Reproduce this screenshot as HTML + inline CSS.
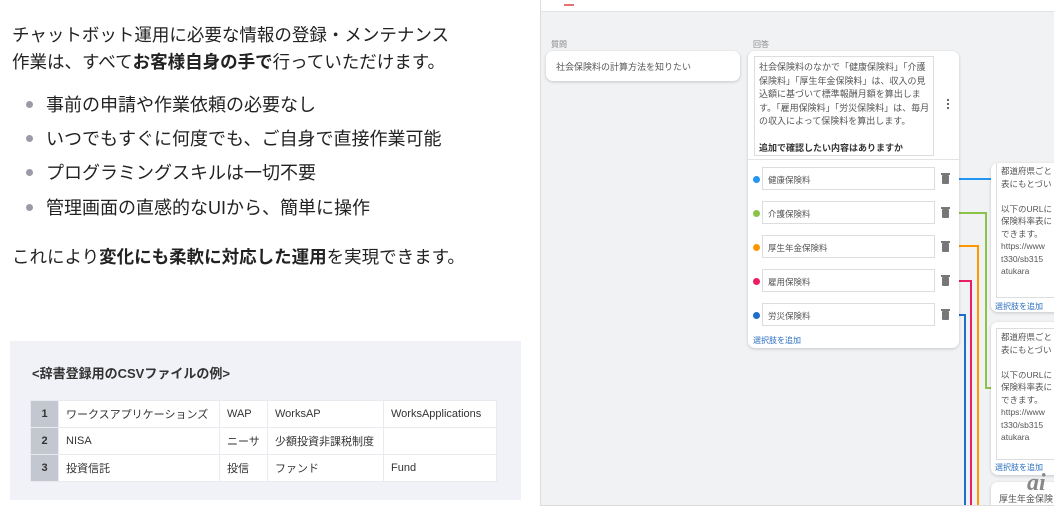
<!DOCTYPE html>
<html><head><meta charset="utf-8"><style>
*{margin:0;padding:0;box-sizing:border-box}
body{width:1058px;height:506px;background:#fff;position:relative;overflow:hidden;font-family:"Liberation Sans","Noto Sans CJK JP",sans-serif;color:#222}
.a{position:absolute}
.t{font-size:17.5px;white-space:nowrap;left:12px}
.li{left:26px;font-size:18px;white-space:nowrap}
.li:before{content:"";display:inline-block;width:7px;height:7px;border-radius:50%;background:#9a9aa8;margin-right:13px;vertical-align:middle;position:relative;top:-2px}
b{font-weight:bold}
.box{left:10px;top:341px;width:511px;height:159px;background:#f0f2f7}
table{position:absolute;left:30px;top:400px;border-collapse:collapse;font-size:11px;color:#333}
td{height:27px;background:#fff;border:1px solid #e8eaef;padding-left:7px}
td.n{background:#c3c7cf;width:28px;text-align:center;padding:0;font-weight:bold}
.panel{left:540px;top:0;width:514px;height:506px;background:#f1f2f4;border-left:1px solid #ddd;border-bottom:1px solid #ddd;overflow:hidden}
.card{background:#fff;border-radius:7px;box-shadow:0 1px 3px rgba(0,0,0,.18)}
.s{font-size:9px;color:#555;white-space:nowrap}
.inp{position:absolute;left:14px;width:173px;height:23px;border:1px solid #ddd;background:#fff;font-size:8.5px;color:#555;padding:6px 5px}
.dot{position:absolute;left:5px;width:7px;height:7px;border-radius:50%}
.tr{position:absolute;left:194px;width:7px;height:9px;background:#777;border-radius:1px}
.tr:before{content:"";position:absolute;left:-1px;top:-2px;width:9px;height:1.5px;background:#777}
.h{position:absolute;height:2px}
.v{position:absolute;width:2px}
.rt{font-size:8.5px;color:#555;line-height:12.5px;white-space:nowrap}
</style></head><body>
<div class="a t" style="top:22px">チャットボット運用に必要な情報の登録・メンテナンス</div>
<div class="a t" style="top:49px">作業は、すべて<b>お客様自身の手で</b>行っていただけます。</div>
<div class="a li" style="top:91px">事前の申請や作業依頼の必要なし</div>
<div class="a li" style="top:125px">いつでもすぐに何度でも、ご自身で直接作業可能</div>
<div class="a li" style="top:159px">プログラミングスキルは一切不要</div>
<div class="a li" style="top:194px">管理画面の直感的なUIから、簡単に操作</div>
<div class="a t" style="top:244px">これにより<b>変化にも柔軟に対応した運用</b>を実現できます。</div>

<div class="a box"></div>
<div class="a" style="left:32px;top:363px;font-size:13px;font-weight:bold;color:#333">&lt;辞書登録用のCSVファイルの例&gt;</div>
<table>
<tr><td class="n">1</td><td style="width:161px">ワークスアプリケーションズ</td><td style="width:48px">WAP</td><td style="width:116px">WorksAP</td><td style="width:113px">WorksApplications</td></tr>
<tr><td class="n">2</td><td>NISA</td><td>ニーサ</td><td>少額投資非課税制度</td><td></td></tr>
<tr><td class="n">3</td><td>投資信託</td><td>投信</td><td>ファンド</td><td>Fund</td></tr>
</table>

<div class="a panel">
 <div class="a" style="left:0;top:0;width:514px;height:12px;background:#fff;border-bottom:1px solid #e2e2e2"></div>
 <div class="a" style="left:23px;top:4px;width:10px;height:2px;background:#e57373"></div>
 <div class="a s" style="left:10px;top:39px;font-size:8px;color:#888">質問</div>
 <div class="a card" style="left:5px;top:51px;width:194px;height:30px"><div class="s" style="padding:9px 10px">社会保険料の計算方法を知りたい</div></div>
 <div class="a s" style="left:212px;top:39px;font-size:8px;color:#888">回答</div>
 <div class="h" style="left:418px;top:178px;width:32px;background:#2196f3"></div>
 <div class="h" style="left:418px;top:212px;width:28px;background:#8bc34a"></div>
 <div class="v" style="left:444px;top:212px;height:177px;background:#8bc34a"></div>
 <div class="h" style="left:444px;top:387px;width:6px;background:#8bc34a"></div>
 <div class="h" style="left:418px;top:245px;width:20px;background:#ff9800"></div>
 <div class="v" style="left:436px;top:245px;height:270px;background:#ff9800"></div>
 <div class="h" style="left:418px;top:280px;width:13px;background:#e91e63"></div>
 <div class="v" style="left:429px;top:280px;height:240px;background:#e91e63"></div>
 <div class="h" style="left:418px;top:314px;width:7px;background:#1e6fc7"></div>
 <div class="v" style="left:423px;top:314px;height:200px;background:#1e6fc7"></div>
 <div class="a card" style="left:207px;top:51px;width:211px;height:297px">
  <div class="a" style="left:6px;top:5px;width:180px;height:100px;border:1px solid #ddd;font-size:9px;color:#555;line-height:13.5px;padding:4px 3px 0 4px;overflow:hidden">社会保険料のなかで「健康保険料」「介護保険料」「厚生年金保険料」は、収入の見込額に基づいて標準報酬月額を算出します。「雇用保険料」「労災保険料」は、毎月の収入によって保険料を算出します。<br><br><b style="color:#333">追加で確認したい内容はありますか</b></div>
  <div class="a" style="left:199px;top:48px;width:2px;height:10px;border-left:2px dotted #666"></div>
  <div class="a" style="left:0;top:108px;width:211px;height:1px;background:#e4e4e4"></div>
  <div class="dot" style="top:125px;background:#2196f3"></div><div class="inp" style="top:116px">健康保険料</div><div class="tr" style="top:124px"></div>
  <div class="dot" style="top:159px;background:#8bc34a"></div><div class="inp" style="top:150px">介護保険料</div><div class="tr" style="top:158px"></div>
  <div class="dot" style="top:193px;background:#ff9800"></div><div class="inp" style="top:184px">厚生年金保険料</div><div class="tr" style="top:192px"></div>
  <div class="dot" style="top:227px;background:#e91e63"></div><div class="inp" style="top:218px">雇用保険料</div><div class="tr" style="top:226px"></div>
  <div class="dot" style="top:261px;background:#1e6fc7"></div><div class="inp" style="top:252px">労災保険料</div><div class="tr" style="top:260px"></div>
  <div class="a s" style="left:5px;top:284px;font-size:8px;color:#2a6fbf">選択肢を追加</div>
 </div>
 <div class="a card" style="left:450px;top:163px;width:80px;height:149px">
  <div class="a rt" style="left:5px;top:0;width:80px;height:135px;border:1px solid #ddd;border-top:none;padding:2px 4px">都道府県ごと<br>表にもとづい<br><br>以下のURLに<br>保険料率表に<br>できます。<br>https://www<br>t330/sb315<br>atukara</div>
  <div class="a" style="left:4px;top:138px;font-size:8px;color:#2a6fbf;white-space:nowrap">選択肢を追加</div>
 </div>
 <div class="a card" style="left:450px;top:322px;width:80px;height:153px">
  <div class="a rt" style="left:5px;top:6px;width:80px;height:132px;border:1px solid #ddd;padding:2px 4px">都道府県ごと<br>表にもとづい<br><br>以下のURLに<br>保険料率表に<br>できます。<br>https://www<br>t330/sb315<br>atukara</div>
  <div class="a" style="left:4px;top:140px;font-size:8px;color:#2a6fbf;white-space:nowrap">選択肢を追加</div>
 </div>
 <div class="a card" style="left:450px;top:482px;width:80px;height:40px"><div class="a s" style="left:8px;top:10px">厚生年金保険</div></div>
 <div class="a" style="left:486px;top:470px;font-size:24px;font-style:italic;font-weight:bold;color:#888;font-family:'Liberation Serif',serif">ai</div>
</div>
</body></html>
